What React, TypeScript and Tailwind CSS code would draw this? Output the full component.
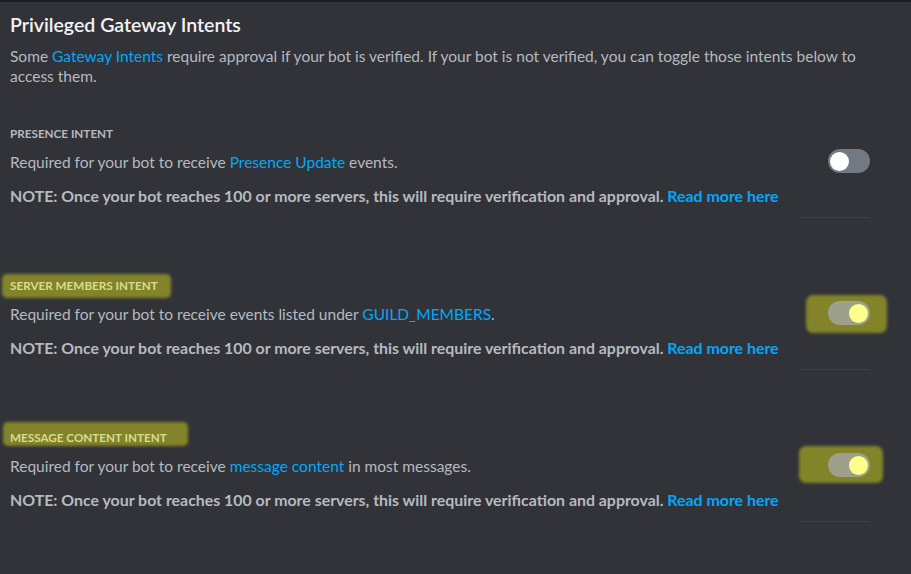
import React from "react";

const font = { fontFamily: 'Lato, "Noto Sans", sans-serif' };

function Toggle({ on }: { on: boolean }) {
  return (
    <div
      className={`relative h-[24px] w-[42px] rounded-full ${on ? "bg-[#9da18b]" : "bg-[#737982]"}`}
    >
      <div
        className={`absolute top-[3px] h-[19px] w-[19px] rounded-full ${on ? "right-[2px] bg-[#ffff8c]" : "left-[2px] bg-white"}`}
      />
    </div>
  );
}

function Link({ children }: { children: React.ReactNode }) {
  return <span className="text-[#00a8fc]">{children}</span>;
}

type Section = {
  label: string;
  desc: React.ReactNode;
  on: boolean;
  highlight?: { label: string; toggle: string };
};

function IntentSection({ label, desc, on, highlight }: Section) {
  return (
    <div className="flex">
      <div className="flex-1">
        <div className="relative inline-block">
          {highlight && (
            <span className={`absolute rounded-[5px] bg-[#83842a] blur-[1.5px] ${highlight.label}`} />
          )}
          <div
            className={`relative text-[11.7px] font-bold leading-[16px] uppercase ${highlight ? "text-[#dadb8f]" : "text-[#b5bac1]"}`}
          >
            {label}
          </div>
        </div>
        <div className="mt-[8px] text-[15.5px] leading-[20px] text-[#b5bac1]">{desc}</div>
        <div className="mt-[14px] text-[15.9px] font-bold leading-[20px] text-[#b5bac1]">
          NOTE: Once your bot reaches 100 or more servers, this will require verification and approval.{" "}
          <Link>Read more here</Link>
        </div>
      </div>
      <div className="flex w-[70px] flex-col items-end pt-[29px]">
        <div className="relative">
          {highlight && (
            <span className={`absolute rounded-[7px] bg-[#83842a] blur-[1.5px] ${highlight.toggle}`} />
          )}
          <div className="relative">
            <Toggle on={on} />
          </div>
        </div>
        <div className="mt-[44px] h-px w-[70px] bg-[#3f4147]" />
      </div>
    </div>
  );
}

export default function App() {
  return (
    <div
      className="min-h-screen border-t-2 border-[#1e1f22] bg-[#313338] pb-10 pl-[10px] pr-[41px] pt-[11px]"
      style={font}
    >
      <h2 className="text-[19.5px] font-semibold leading-[24px] text-[#f2f3f5]">Privileged Gateway Intents</h2>
      <p className="mt-[9px] text-[15.5px] leading-[20px] text-[#b5bac1]">
        Some <Link>Gateway Intents</Link> require approval if your bot is verified. If your bot is not verified, you
        can toggle those intents below to access them.
      </p>
      <div className="mt-[34px] flex flex-col gap-[54px]">
        <IntentSection
          label="Presence Intent"
          on={false}
          desc={
            <>
              Required for your bot to receive <Link>Presence Update</Link> events.
            </>
          }
        />
        <IntentSection
          label="Server Members Intent"
          on={true}
          highlight={{
            label: "-left-[8px] -right-[13px] -top-[3px] -bottom-[5px]",
            toggle: "-left-[22px] -right-[17px] -top-[6px] -bottom-[8px]",
          }}
          desc={
            <>
              Required for your bot to receive events listed under <Link>GUILD_MEMBERS</Link>.
            </>
          }
        />
        <IntentSection
          label="Message Content Intent"
          on={true}
          highlight={{
            label: "-left-[7px] -right-[21px] -top-[7px] -bottom-[1px]",
            toggle: "-left-[29px] -right-[13px] -top-[7px] -bottom-[6px]",
          }}
          desc={
            <>
              Required for your bot to receive <Link>message content</Link> in most messages.
            </>
          }
        />
      </div>
    </div>
  );
}
